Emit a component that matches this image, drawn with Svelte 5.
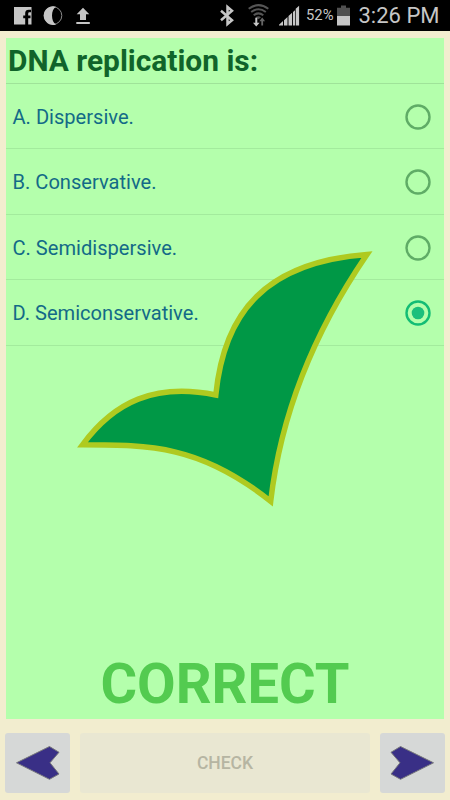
<script lang="ts">
  const question = 'DNA replication is:';
  const answers = [
    'A. Dispersive.',
    'B. Conservative.',
    'C. Semidispersive.',
    'D. Semiconservative.',
  ];

  let selected = $state(3);
</script>

<div class="screen">
  <header class="status">
    <svg width="100" height="31" viewBox="0 0 100 31" aria-hidden="true">
      <path fill="#c6c6c6" fill-rule="evenodd" d="M14 7h17.500v17.500h-3.300v-6.300h2.300v-2.600h-2.300v-2.200q0-1.200 1.200-1.200H31V9.700h-2.200q-3.600 0-3.600 3.400v2.500h-2v2.600h2v6.300H14z" />
      <circle cx="53" cy="15.600" r="8.800" fill="none" stroke="#8c8c8c" stroke-width="1" />
      <path fill="#c6c6c6" d="M56 6.800a9.300 9.300 0 1 0 0 17.600c-5.300-2.500-5.300-15 0-17.600z" />
      <path fill="#c6c6c6" d="M83 7.700l6.300 6.500H86V20h-6v-5.800h-3.300zM76.300 22h13.500v2H76.300z" />
    </svg>
    <svg class="signals" width="84" height="31" viewBox="216 0 84 31" aria-hidden="true">
      <path fill="none" stroke="#c6c6c6" stroke-width="2.500" d="M221 10.700l11 9.600-4.500 3.700V7l4.500 3.700-11 9.600" />
      <path fill="none" stroke="#555" stroke-width="2" d="M248.700 8.800q9.800-7.400 19.600 0M251.200 12q7.300-5.400 14.600 0M253.700 15.200q4.800-3.600 9.600 0" />
      <path fill="#555" d="M255.500 17.300q3-2 5.500 0l-2.500 2z" />
      <path fill="#c6c6c6" d="M255.300 17.800h2v5h2.300l-3.300 3.700-3.300-3.700h2.300z" />
      <path fill="#666" d="M261.300 25.500h1.800v-4.300h2l-2.900-3.700-2.900 3.700h2z" />
      <path fill="#c6c6c6" d="M279 25.500v-.8l4-3.600v4.400zM284 25.500v-5.300l3.500-3.200v8.500zM288.500 25.500v-9.500l3.600-3.200v12.700zM293 25.500V11.900l2-1.700v15.300zM295.700 25.500V8.800l3.400-3.100v19.800z" />
    </svg>
    <span class="percent">52%</span>
    <svg class="battery" width="13" height="31" viewBox="0 0 13 31" aria-hidden="true">
      <path fill="#505050" d="M4 5.500h5v2.300h4V16H0V7.800h4z" />
      <path fill="#c6c6c6" d="M0 16h13v9.500H0z" />
    </svg>
    <span class="clock">3:26 PM</span>
  </header>

  <main class="quiz">
    <h1>{question}</h1>
    <div class="answers" role="radiogroup">
      {#each answers as answer, i}
        <button class="answer" role="radio" aria-checked={selected === i} onclick={() => (selected = i)}>
          <span>{answer}</span>
          <svg class="radio" class:checked={selected === i} width="26" height="26" viewBox="0 0 26 26">
            <circle class="ring" cx="13" cy="13" r="11.500" />
            {#if selected === i}
              <circle class="dot" cx="13" cy="13" r="6.300" />
            {/if}
          </svg>
        </button>
      {/each}
    </div>
    <svg class="tick" width="304" height="264" viewBox="74 246 304 264" aria-hidden="true">
      <path d="M82.500 444.800C114 402 155 382.500 215.800 395C224 312 266 262 367 254.500C314 332 281 413 270.700 501.300C200 445 150 445 82.500 444.800Z" />
    </svg>
    <p class="result">CORRECT</p>
  </main>

  <nav>
    <button class="step" aria-label="Previous">
      <svg width="65" height="60" viewBox="0 0 65 60"><path d="M11.500 29.800L44.500 13.500 54 19.300 45 29.800 54 41 44.500 46.300Z" /></svg>
    </button>
    <button class="check" disabled>CHECK</button>
    <button class="step" aria-label="Next">
      <svg width="65" height="60" viewBox="0 0 65 60"><path d="M53.500 29.800L20.500 13.500 11 19.300 20 29.800 11 41 20.500 46.300Z" /></svg>
    </button>
  </nav>
</div>

<style>
  :global(body) {
    margin: 0;
    background: #f2edcf;
  }
  .screen {
    width: 450px;
    height: 800px;
    overflow: hidden;
    display: flex;
    flex-direction: column;
    background: #f2edcf;
    font-family: Roboto, sans-serif;
  }
  .status {
    height: 31px;
    flex: none;
    display: flex;
    align-items: center;
    background: #000;
    color: #c6c6c6;
    white-space: nowrap;
  }
  .signals {
    margin-left: 116px;
  }
  .percent {
    width: 31px;
    margin-left: 6px;
    font-size: 14.800px;
    line-height: 33px;
  }
  .battery {
    flex: none;
  }
  .clock {
    margin-left: 8.500px;
    font-size: 22px;
    line-height: 34px;
  }
  .quiz {
    position: relative;
    height: 681px;
    flex: none;
    margin: 6.700px 6px 0;
    display: flex;
    flex-direction: column;
    background: #b4ffac;
  }
  h1 {
    box-sizing: border-box;
    height: 46px;
    margin: 0;
    padding-left: 2px;
    border-bottom: 1px solid #9fe399;
    color: #10642a;
    font-size: 29.900px;
    font-weight: 700;
    line-height: 45px;
    white-space: nowrap;
  }
  .answers {
    display: flex;
    flex-direction: column;
  }
  button {
    margin: 0;
    border: 0;
    padding: 0;
    font-family: inherit;
  }
  .answer {
    box-sizing: border-box;
    height: 65.500px;
    padding: 2px 13.500px 0 6.500px;
    display: flex;
    align-items: center;
    justify-content: space-between;
    border-bottom: 1px solid #a3eb9d;
    background: none;
    color: #136a87;
    font-size: 20.100px;
  }
  .ring {
    fill: none;
    stroke: #5fac66;
    stroke-width: 2.400;
  }
  .checked .ring {
    stroke: #13bd75;
  }
  .dot {
    fill: #1bbf7c;
  }
  .tick {
    position: absolute;
    left: 68px;
    top: 208.300px;
    pointer-events: none;
  }
  .tick path {
    fill: #009846;
    stroke: #afca20;
    stroke-width: 5.500;
    stroke-miterlimit: 10;
  }
  .result {
    margin: auto 0 2px;
    color: #53cb50;
    font-size: 56px;
    font-weight: 700;
    line-height: 66px;
    text-align: center;
  }
  nav {
    display: flex;
    gap: 10px;
    padding: 15px 5px 0;
    margin-top: -0.700px;
  }
  nav button {
    height: 60px;
    border-radius: 3px;
  }
  .step {
    width: 65px;
    flex: none;
    background: #d6d8d7;
  }
  .step svg {
    display: block;
  }
  .step path {
    fill: #392f86;
    stroke: #77777b;
    stroke-width: 1;
  }
  .check {
    flex: 1;
    background: #e9e7d2;
    color: #b6b5a2;
    font-size: 17.500px;
    font-weight: 500;
  }
</style>
